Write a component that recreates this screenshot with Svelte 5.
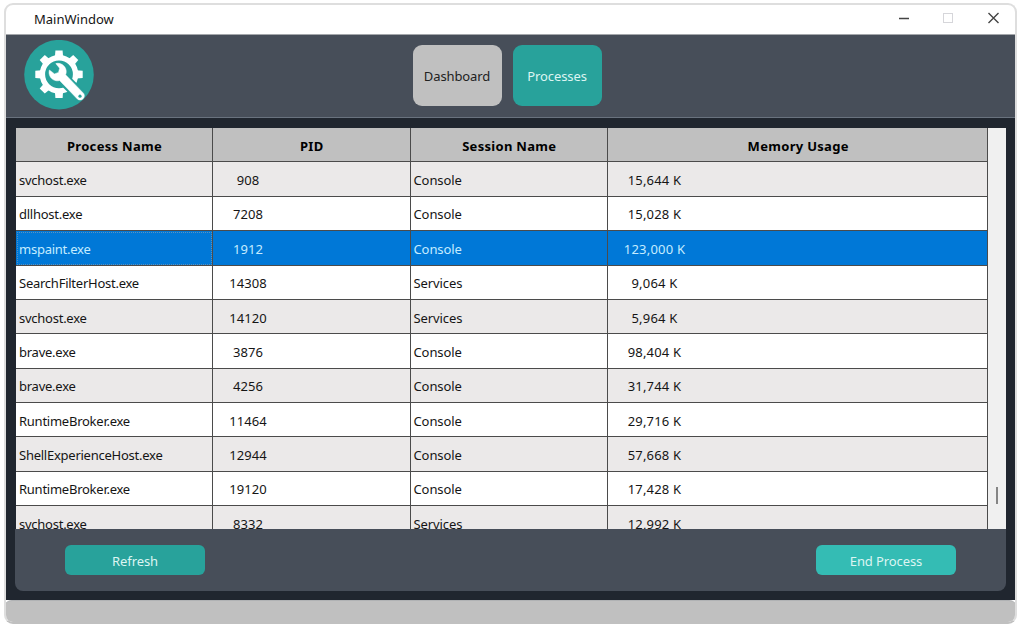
<script>
  const rows = [
    ['svchost.exe', '908', 'Console', '15,644 K'],
    ['dllhost.exe', '7208', 'Console', '15,028 K'],
    ['mspaint.exe', '1912', 'Console', '123,000 K'],
    ['SearchFilterHost.exe', '14308', 'Services', '9,064 K'],
    ['svchost.exe', '14120', 'Services', '5,964 K'],
    ['brave.exe', '3876', 'Console', '98,404 K'],
    ['brave.exe', '4256', 'Console', '31,744 K'],
    ['RuntimeBroker.exe', '11464', 'Console', '29,716 K'],
    ['ShellExperienceHost.exe', '12944', 'Console', '57,668 K'],
    ['RuntimeBroker.exe', '19120', 'Console', '17,428 K'],
    ['svchost.exe', '8332', 'Services', '12,992 K'],
  ];
  let selected = $state(2);
  const teeth = [0, 45, 90, 135, 180, 225, 270, 315];
</script>

<div class="window">
  <div class="titlebar">
    <span class="title">MainWindow</span>
    <svg class="controls" width="104" height="14" viewBox="0 0 104 14" fill="none">
      <path d="M1 7.5H11" stroke="#444" stroke-width="1.5" />
      <rect x="45.5" y="2.5" width="9" height="9" stroke="#d6d6da" />
      <path d="M90.5 2L100.5 12M100.5 2L90.5 12" stroke="#444" stroke-width="1.4" />
    </svg>
  </div>

  <header>
    <svg class="logo" width="70" height="70" viewBox="0 0 70 70">
      <circle cx="35" cy="34.7" r="34.8" fill="#28a29b" />
      <g fill="#fff">
        {#each teeth as angle}
          <path d="M30.9 17L31.4 10.6H38.6L39.1 17Z" transform="rotate({angle} 35 34.3)" />
        {/each}
      </g>
      <circle cx="35" cy="34.3" r="16.6" fill="none" stroke="#fff" stroke-width="5.4" />
      <path d="M38 37.5L57 56.5" stroke="#28a29b" stroke-width="12.5" />
      <path
        d="M31.8 23.6C36.2 22.4 40.9 25.2 42 29.8C42.4 31.6 42.3 33.2 41.6 34.8L59.6 53.4C62.2 57.2 57.4 62 53.6 59.2L35.6 40.5C31.2 41.8 26.6 39 25.4 34.8C24.9 33 25 31.5 25.4 30L30.5 33.9L34.5 32.4L35.6 28.2Z"
        fill="#fff"
        stroke="#fff"
        stroke-width="0.5"
        stroke-linejoin="round"
      />
      <circle cx="56" cy="56.2" r="1.6" fill="#28a29b" />
    </svg>
    <nav>
      <button class="tab idle">Dashboard</button>
      <button class="tab">Processes</button>
    </nav>
  </header>

  <main>
    <div class="table-area">
      <div class="table">
        <div class="row head">
          <div>Process Name</div><div>PID</div><div>Session Name</div><div>Memory Usage</div>
        </div>
        {#each rows as row, i}
          <!-- svelte-ignore a11y_click_events_have_key_events, a11y_no_static_element_interactions -->
          <div class="row" class:selected={i === selected} onclick={() => (selected = i)}>
            <div class="name">{row[0]}</div>
            <div class="pid"><span>{row[1]}</span></div>
            <div class="session">{row[2]}</div>
            <div class="memory"><span>{row[3]}</span></div>
          </div>
        {/each}
      </div>
      <div class="scrollbar"><div class="thumb"></div></div>
    </div>
    <footer>
      <button class="action">Refresh</button>
      <button class="action bright">End Process</button>
    </footer>
  </main>
  <div class="status"></div>
</div>

<style>
  :global(body) {
    background: #fff;
    overflow: hidden;
  }
  .window {
    box-sizing: border-box;
    width: 1013px;
    height: 621px;
    margin: 3px 0 0 4px;
    border: 2px solid #dedede;
    border-bottom-color: #c0c0c0;
    border-radius: 9px;
    overflow: hidden;
    display: flex;
    flex-direction: column;
    font: 13px 'Noto Sans', 'Open Sans', sans-serif;
    color: #151515;
  }
  .titlebar {
    height: 29px;
    flex: none;
    display: flex;
    align-items: center;
    justify-content: space-between;
    padding: 0 13px 0 28px;
    border-bottom: 1px solid #a4a7ab;
  }
  .title {
    margin-top: -2px;
  }
  .controls {
    margin-top: -3px;
  }
  header {
    box-sizing: border-box;
    height: 83px;
    flex: none;
    background: #474e59;
    border-bottom: 1px solid #69727e;
    display: grid;
    grid-template-columns: 1fr auto 1fr;
    align-items: start;
  }
  .logo {
    margin: 5px 0 0 18px;
  }
  nav {
    display: flex;
    gap: 11px;
    padding-top: 10px;
    margin-right: 7px;
  }
  button {
    border: 0;
    padding: 0;
    font: inherit;
    color: #dcf5f2;
    background: #28a29b;
  }
  .tab {
    width: 89px;
    height: 61px;
    border-radius: 9px;
    padding-top: 1px;
    letter-spacing: -0.1px;
  }
  .tab.idle {
    background: #c0c0c0;
    color: #222;
  }
  main {
    box-sizing: border-box;
    height: 482px;
    flex: none;
    background: #20262f;
    padding: 10px 9px 0;
  }
  .table-area {
    height: 401px;
    display: flex;
    margin-left: 1px;
    overflow: hidden;
  }
  .table {
    flex: none;
    width: 972.4px;
  }
  .row {
    display: grid;
    grid-template-columns: 197px 197.5px 197.5px 1fr;
    height: 34.38px;
    background: #fff;
  }
  .row > div {
    box-sizing: border-box;
    padding: 2px 3px 0 3px;
    display: flex;
    align-items: center;
    border-right: 1px solid #4b4b4b;
    border-bottom: 1px solid #4b4b4b;
    white-space: nowrap;
  }
  .row .name {
    letter-spacing: -0.25px;
  }
  .row .session {
    letter-spacing: -0.1px;
  }
  .row:nth-child(even) {
    background: #ebe9e9;
  }
  .row.head {
    background: #c0c0c0;
    font-weight: 700;
    color: #000;
    letter-spacing: 0.3px;
  }
  .row.head > div {
    justify-content: center;
    padding: 2px 0 0 1px;
  }
  .row.selected {
    background: #0078d7;
    color: #c5ecff;
  }
  .selected .name {
    outline: 1px dotted #5c91bd;
    outline-offset: -2px;
  }
  .pid span {
    width: 64px;
    text-align: center;
    letter-spacing: 0.1px;
  }
  .memory span {
    width: 87px;
    text-align: center;
    letter-spacing: 0.2px;
  }
  .scrollbar {
    flex: 1;
    background: #f0f0f0;
    display: flex;
    flex-direction: column;
    align-items: center;
  }
  .thumb {
    width: 2px;
    height: 17px;
    margin-top: 359px;
    background: #858585;
  }
  footer {
    box-sizing: border-box;
    height: 62px;
    background: #474e59;
    border-radius: 0 0 8px 8px;
    display: flex;
    justify-content: space-between;
    padding: 16px 50px;
  }
  .action {
    width: 140px;
    height: 30px;
    border-radius: 6px;
    padding-top: 1px;
    letter-spacing: -0.1px;
  }
  .action.bright {
    background: #34bcb4;
  }
  .status {
    flex: 1;
    background: #c0c0c0;
    border-top: 1px solid #b0b2b4;
    margin: 0 -2px;
    border-radius: 8px 8px 0 0;
  }
</style>
